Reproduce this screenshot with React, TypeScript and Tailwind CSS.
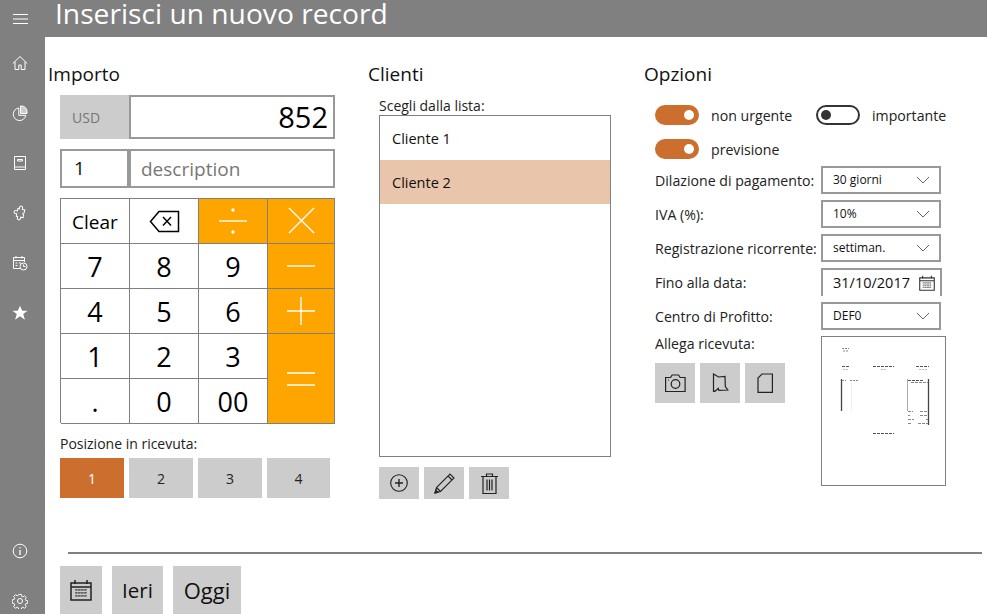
import React from "react";

const F = "font-['Open_Sans','Noto_Sans',sans-serif]";

const W = ({ children, s = 16, vb = 16, c = "white", w = 1, className = "" }: any) => (
  <svg width={s} height={s} viewBox={`0 0 ${vb} ${vb}`} fill="none" stroke={c} strokeWidth={w} className={className}>
    {children}
  </svg>
);

const Home = () => (
  <W><path d="M.8 8.500 8 1.500l7.200 7M3 6.800v7.700h3.800v-4.500h2.400v4.500H13V6.800" /></W>
);
const Pie = () => (
  <W><path d="M6.800 3a6.300 6.300 0 1 0 7 7.300H6.800z" /><path d="M8.500 1h1a5.500 5.500 0 0 1 5.500 5.500V8.500H8.500z" fill="#ccc" stroke="white" /></W>
);
const Book = () => (
  <W><path d="M2.500 1.500h11v13h-11zM2.500 12h11M5.500 4.500h5v1.500h-5z" /></W>
);
const Puzzle = () => (
  <W><path d="M5 4h1.500c-.5-2 .5-3 1.500-3s2 1 1.500 3H12v3l-1.200 1L12 9.500V12H9.500c.5 2-.5 3-1.500 3s-2-1-1.500-3H5V9.500c-2 .5-3-.5-3-1.500s1-2 3-1.500z" transform="rotate(12 8 8)" /></W>
);
const CalClock = () => (
  <W>
    <path d="M8 13.500H1.500v-11h11V7M1.500 5.500h11M4 1v2.500M10 1v2.500" />
    <path d="M3.500 7.500h2v1h-2zM3.500 10h2v1h-2zM7 7.500h2v1H7z" fill="white" stroke="none" />
    <circle cx="11.500" cy="11.500" r="3.500" />
    <path d="M11.500 9.500v2h2" />
  </W>
);
const Star = () => (
  <svg width="16" height="16" viewBox="0 0 16 16" fill="white"><path d="M8 .8l2.200 5h5.300l-4.300 3.300 1.700 5.600L8 11.300l-4.900 3.400 1.700-5.600L.5 5.800h5.300z" /></svg>
);
const Info = () => (
  <W><circle cx="8" cy="8" r="6.800" /><path d="M8 7v5M8 4.200v1.400" strokeWidth="1.300" /></W>
);
const Gear = () => (
  <W>
    <circle cx="8" cy="8" r="2.500" />
    <path d="M6.700 1h2.600l.4 2 1.300.6 1.800-1.100 1.800 1.800-1.100 1.800.6 1.300 2 .4v2.600l-2 .4-.6 1.300 1.100 1.800-1.800 1.800-1.800-1.100-1.300.6-.4 2H6.700l-.4-2-1.300-.6-1.800 1.100-1.800-1.800 1.100-1.800-.6-1.300-2-.4V6.700l2-.4.6-1.300-1.100-1.800 1.800-1.800L5 2.500l1.300-.6z" transform="translate(.4 .4) scale(.95)" />
  </W>
);

const Chevron = () => (
  <svg width="14" height="8" viewBox="0 0 14 8" fill="none" stroke="#666" strokeWidth="1"><path d="M1 1l6 6 6-6" /></svg>
);
const CalendarIcon = ({ s = 16, c = "#333" }: { s?: number; c?: string }) => (
  <svg width={s} height={s} viewBox="0 0 22 22" fill="none" stroke={c} strokeWidth="1.500">
    <path d="M1 4h20v17H1zM1 8h20M5 1v4M17 1v4" />
    <path d="M5 11h12M5 14h12M5 17h12M7 10v9M10 10v9M13 10v9M16 10v9" strokeWidth="1" strokeDasharray="1.500 1.500" />
  </svg>
);

const Toggle = ({ on }: { on: boolean }) =>
  on ? (
    <div className="flex h-5 w-11 shrink-0 items-center justify-end rounded-full bg-[#cc6e2d] pr-[5px]">
      <div className="h-[10px] w-[10px] rounded-full bg-white" />
    </div>
  ) : (
    <div className="flex h-5 w-11 shrink-0 items-center rounded-full border-2 border-[#333] pl-[3px]">
      <div className="h-[10px] w-[10px] rounded-full bg-[#333]" />
    </div>
  );

const Key = ({ children, className = "", small = false }: { children?: React.ReactNode; className?: string; small?: boolean }) => (
  <div className={`flex items-center justify-center border-r border-b border-[#808080] leading-none text-black ${small ? "pt-[3px] text-[19px]" : "text-[27px]"} ${className}`}>
    {children}
  </div>
);

const Op = ({ children }: { children: React.ReactNode }) => (
  <svg width="32" height="32" viewBox="0 0 32 32" fill="white" stroke="white" strokeWidth="1.400">{children}</svg>
);

const GrayBtn = ({ children }: { children: React.ReactNode }) => (
  <div className="flex w-10 items-center justify-center bg-[#cccccc]">{children}</div>
);

const Select = ({ label, value }: { label: string; value: string }) => (
  <div className="flex h-[34px] shrink-0 items-start">
    <div className="flex h-7 w-[166px] items-center whitespace-nowrap pt-px text-[14.150px] text-[#222]">{label}</div>
    <div className="flex h-7 w-[120px] items-center justify-between border-2 border-[#999] pl-[10px] pr-[9px] text-[12px] text-[#111]">
      <span>{value}</span>
      <Chevron />
    </div>
  </div>
);

const Receipt = () => (
  <svg width="123" height="148" viewBox="1 1 123 148" fill="none" stroke="#888" strokeWidth="1">
    <path d="M21 12.500h7M22 15h5" strokeDasharray="2 1" />
    <path d="M21 30.500h8M52 30.500h21M95 30.500h13" strokeDasharray="3 1" stroke="#555" />
    <path d="M22 33.500h5M60 33.500h6M98 33.500h8" stroke="#bbb" strokeDasharray="2 1" />
    <path d="M20.500 43v32" strokeWidth="1.300" stroke="#444" />
    <path d="M21 44.500h4M29 44.500h9" strokeDasharray="2 1" />
    <path d="M30.500 46v29" stroke="#eee" />
    <path d="M86.500 43v32" stroke="#aaa" />
    <path d="M107.500 43v46" stroke="#444" strokeWidth="1.300" />
    <path d="M87 44.500h15" strokeDasharray="3 1" stroke="#555" />
    <path d="M90 46.500h17M87 75.500h5M99 75.500h8M87 79.500h2M99 79.500h8M87 83.500h6M105 83.500h2M87 87.500h4M97 87.500h10" strokeDasharray="3 1" />
    <path d="M52 97.500h21" strokeDasharray="3 1" stroke="#555" />
  </svg>
);

const Heading = ({ children }: { children: React.ReactNode }) => (
  <div className="h-7 text-[19px] leading-7 text-[#111]">{children}</div>
);

export default function App() {
  return (
    <div className={`flex h-[614px] w-[987px] flex-col overflow-hidden bg-white ${F}`}>
      <header className="flex h-[37px] shrink-0 items-center bg-[#808080] text-white">
        <div className="flex w-[55px] shrink-0 pl-[13px]">
          <svg width="15" height="10" viewBox="0 0 15 10" stroke="white" strokeWidth="1"><path d="M0 .5h15M0 5h15M0 9.500h15" /></svg>
        </div>
        <div className="h-[37px] whitespace-nowrap text-[28.200px] leading-[27px] font-normal">Inserisci un nuovo record</div>
      </header>
      <div className="flex min-h-0 flex-1">
        <aside className="flex w-[45px] shrink-0 flex-col bg-[#808080] pt-px">
          {[Home, Pie, Book, Puzzle, CalClock, Star, null, Info, Gear].map((I, i) =>
            I ? (
              <div key={i} className="flex h-[50px] w-[40px] shrink-0 items-center justify-center"><I /></div>
            ) : (
              <div key={i} className="h-[188px] shrink-0" />
            )
          )}
        </aside>
        <main className="flex min-w-0 flex-1 flex-col pl-[3px]">
          <div className="flex h-[515px] shrink-0 pt-[23px]">
            {/* Importo */}
            <section className="flex w-[320px] shrink-0 flex-col">
              <Heading>Importo</Heading>
              <div className="mt-[7px] ml-3 flex flex-col">
                <div className="flex h-11 w-[275px]">
                  <div className="flex w-[69px] items-center bg-[#cccccc] pl-3 text-[14px] text-[#777]">USD</div>
                  <div className="flex flex-1 items-center justify-end border-2 border-[#999] pr-[5px] text-[29px] text-black">852</div>
                </div>
                <div className="mt-[10px] flex h-[39px] w-[275px] text-[19px]">
                  <div className="flex w-[69px] items-center border-2 border-[#999] pl-3 text-[#111]">1</div>
                  <div className="flex flex-1 items-center border-2 border-[#999] pl-[10px] pt-px text-[#777]">description</div>
                </div>
                <div className="mt-[10px] grid h-[225px] w-[275px] grid-cols-[69px_69px_69px_67px] grid-rows-[45px_45px_45px_45px_45px] border-t border-l border-[#808080]">
                  <Key small>Clear</Key>
                  <Key>
                    <svg width="31" height="23" viewBox="0 0 31 23" fill="none" stroke="black" strokeWidth="1.500"><path d="M10 1.500h19.500v20H10L1.500 11.500zM14 7l8 8.500M22 7l-8 8.500" /></svg>
                  </Key>
                  <Key className="bg-[#ffa500]">
                    <Op><path d="M2 16h28" /><circle cx="16" cy="5" r="1" /><circle cx="16" cy="27" r="1" /></Op>
                  </Key>
                  <Key className="bg-[#ffa500]">
                    <Op><path d="M4 3l25 25M29 3L4 28" /></Op>
                  </Key>
                  <Key>7</Key><Key>8</Key><Key>9</Key>
                  <Key className="bg-[#ffa500]"><Op><path d="M2 16h28" /></Op></Key>
                  <Key>4</Key><Key>5</Key><Key>6</Key>
                  <Key className="bg-[#ffa500]"><Op><path d="M2 16h28M16 2v28" /></Op></Key>
                  <Key>1</Key><Key>2</Key><Key>3</Key>
                  <Key className="row-span-2 bg-[#ffa500]"><Op><path d="M2 10h28M2 22h28" /></Op></Key>
                  <Key>.</Key><Key>0</Key><Key>00</Key>
                </div>
                <div className="mt-[12px] h-[23px] text-[14px] leading-[18px] text-[#222]">Posizione in ricevuta:</div>
                <div className="flex h-10 gap-[5px] text-[14px]">
                  {["1", "2", "3", "4"].map((n, i) => (
                    <div key={n} className={`flex items-center justify-center ${i === 3 ? "w-[63px]" : "w-[64px]"} ${i === 0 ? "bg-[#cc6e2d] text-white" : "bg-[#cccccc] text-[#222]"}`}>{n}</div>
                  ))}
                </div>
              </div>
            </section>
            {/* Clienti */}
            <section className="flex w-[276px] shrink-0 flex-col">
              <Heading>Clienti</Heading>
              <div className="ml-[11px] flex flex-col">
                <div className="h-[27px] pt-[9px] whitespace-nowrap text-[14px] leading-[18px] text-[#222]">Scegli dalla lista:</div>
                <div className="flex h-[342px] w-[232px] flex-col border border-[#808080] text-[14.500px]">
                  <div className="flex h-11 items-center pl-3 pt-px text-[#111]">Cliente 1</div>
                  <div className="flex h-11 items-center bg-[#e9c5ab] pl-3 pt-px text-[#111]">Cliente 2</div>
                </div>
                <div className="mt-[10px] flex h-8 gap-[5px]">
                  <GrayBtn>
                    <svg width="18" height="18" viewBox="0 0 18 18" fill="none" stroke="#222" strokeWidth="1.100"><circle cx="9" cy="9" r="8.300" /><path d="M5 9h8M9 5v8" strokeWidth="1.400" /></svg>
                  </GrayBtn>
                  <GrayBtn>
                    <svg width="21" height="21" viewBox="0 0 21 21" fill="none" stroke="#222" strokeWidth="1.100"><path d="M1 20l1.500-5.500L16 1l4 4L6.500 18.500zM2.500 14.500l4 4M14 3l4 4" /><path d="M1 20l.8-3 2.200 2.200z" fill="#222" /></svg>
                  </GrayBtn>
                  <GrayBtn>
                    <svg width="17" height="21" viewBox="0 0 17 21" fill="none" stroke="#222" strokeWidth="1.200"><path d="M0 3.500h17M5.500 3.500V1h6v2.500M2 3.500v17h13v-17M6 6.500v11M8.500 6.500v11M11 6.500v11" /></svg>
                  </GrayBtn>
                </div>
              </div>
            </section>
            {/* Opzioni */}
            <section className="flex min-w-0 flex-1 flex-col">
              <Heading>Opzioni</Heading>
              <div className="ml-[11px] flex flex-col pt-[17px] text-[14.150px] text-[#222]">
                <div className="flex h-5 items-center">
                  <Toggle on />
                  <span className="ml-3 w-[105px] pt-[2px]">non urgente</span>
                  <Toggle on={false} />
                  <span className="ml-3 pt-[2px]">importante</span>
                </div>
                <div className="mt-[14px] flex h-5 items-center">
                  <Toggle on />
                  <span className="ml-3 pt-[2px]">previsione</span>
                </div>
                <div className="mt-[7px] flex flex-col">
                  <Select label="Dilazione di pagamento:" value="30 giorni" />
                  <Select label="IVA (%):" value="10%" />
                  <Select label="Registrazione ricorrente:" value="settiman." />
                  <div className="flex h-[34px] shrink-0 items-start">
                    <div className="flex h-7 w-[166px] items-center pt-px">Fino alla data:</div>
                    <div className="flex h-7 w-[121px] items-center justify-between border-x-2 border-t-2 border-[#999] pr-[5px] pl-[10px] text-[14.500px] text-[#111]">
                      <span>31/10/2017</span>
                      <CalendarIcon />
                    </div>
                  </div>
                  <Select label="Centro di Profitto:" value="DEF0" />
                </div>
                <div className="flex">
                  <div className="flex w-[166px] shrink-0 flex-col">
                    <div className="h-[27px] leading-4">Allega ricevuta:</div>
                    <div className="flex h-10 gap-[5px]">
                      <GrayBtn>
                        <svg width="21" height="18" viewBox="0 0 21 18" fill="none" stroke="#222" strokeWidth="1.200"><path d="M.6 3.500h5l1.500-2.500h6.500l1.500 2.500h5v14H.6z" /><circle cx="10.500" cy="10" r="4.300" /><path d="M3 6h1" /></svg>
                      </GrayBtn>
                      <GrayBtn>
                        <svg width="17" height="20" viewBox="0 0 17 20" fill="none" stroke="#222" strokeWidth="1.200"><path d="M1.500 1l5 3v0l6.500-.5.300 10 2.500 3.500-9 .3-.5-2-3.300 3-1.500-.5zM1.500 1v18" /></svg>
                      </GrayBtn>
                      <GrayBtn>
                        <svg width="16" height="20" viewBox="0 0 16 20" fill="none" stroke="#222" strokeWidth="1.200"><path d="M5 1h10.400v18.400H1V5z" /></svg>
                      </GrayBtn>
                    </div>
                  </div>
                  <div className="h-[150px] w-[125px] shrink-0 border border-[#808080]"><Receipt /></div>
                </div>
              </div>
            </section>
          </div>
          <div className="ml-[20px] h-[2px] w-[914px] shrink-0 bg-[#808080]" />
          <div className="ml-3 mt-[12px] flex h-[48px] shrink-0 gap-[10px] text-[22px] text-[#111]">
            <div className="flex w-[42px] items-center justify-center bg-[#cccccc]"><CalendarIcon s={22} c="#222" /></div>
            <div className="flex w-[51px] items-center justify-center bg-[#cccccc] pt-px text-[20.500px]">Ieri</div>
            <div className="flex w-[68px] items-center justify-center bg-[#cccccc] pt-px">Oggi</div>
          </div>
        </main>
      </div>
    </div>
  );
}
